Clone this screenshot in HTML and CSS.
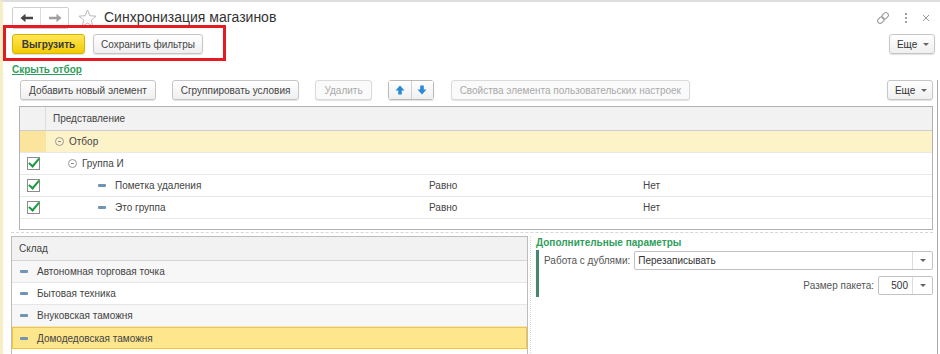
FILE: index.html
```html
<!DOCTYPE html>
<html>
<head>
    <title>Синхронизация магазинов</title>
    <link rel="stylesheet" href="styles.css">
</head>
<body>
    <div class="window">
        <header class="header">
            <div class="nav">
                <span class="nav-btn">
                    <svg width="14" height="10" viewBox="0 0 14 10"><path d="M0.5 5 L5.5 0.8 V3.8 H13 V6.2 H5.5 V9.2 Z" fill="#454545"/></svg>
                </span>
                <span class="nav-btn">
                    <svg width="14" height="10" viewBox="0 0 14 10"><path d="M13.5 5 L8.5 0.8 V3.8 H1 V6.2 H8.5 V9.2 Z" fill="#a0a0a0"/></svg>
                </span>
            </div>
            <svg class="star" width="19" height="18" viewBox="0 0 19 18"><polygon points="9.5,1 11.9,6.7 18,7.2 13.3,11.2 14.8,17.2 9.5,14 4.2,17.2 5.7,11.2 1,7.2 7.1,6.7" fill="none" stroke="#b9b9b9" stroke-width="1"/></svg>
            <h1 class="title">Синхронизация магазинов</h1>
            <div class="header-tools">
                <svg width="14" height="14" viewBox="0 0 14 14"><g transform="rotate(-45 7 7)" fill="none" stroke="#9a9a9a" stroke-width="1.1"><rect x="0.5" y="4.5" width="7" height="5" rx="2.5"/><rect x="6.5" y="4.5" width="7" height="5" rx="2.5"/></g></svg>
                <svg width="4" height="12" viewBox="0 0 4 12"><circle cx="2" cy="2" r="1.1" fill="#8a8a8a"/><circle cx="2" cy="6" r="1.1" fill="#8a8a8a"/><circle cx="2" cy="10" r="1.1" fill="#8a8a8a"/></svg>
                <svg width="8" height="8" viewBox="0 0 8 8"><path d="M1 1 L7 7 M7 1 L1 7" stroke="#9a9a9a" stroke-width="1"/></svg>
            </div>
        </header>

        <div class="toolbar main-bar">
            <button class="btn btn-primary">Выгрузить</button>
            <button class="btn">Сохранить фильтры</button>
            <span class="spacer"></span>
            <button class="btn btn-more">Еще <span class="caret"></span></button>
        </div>
        <div class="highlight-frame"></div>

        <a class="link-toggle" href="#">Скрыть отбор</a>

        <main class="content">
            <div class="toolbar sub-bar">
                <button class="btn">Добавить новый элемент</button>
                <button class="btn">Сгруппировать условия</button>
                <button class="btn" disabled>Удалить</button>
                <div class="btn-pair">
                    <button class="btn btn-icon">
                        <svg width="10" height="10" viewBox="0 0 10 10"><polygon points="5,0.5 9.5,5.5 6.8,5.5 6.8,9.5 3.2,9.5 3.2,5.5 0.5,5.5" fill="#2a8ad6"/></svg>
                    </button>
                    <button class="btn btn-icon">
                        <svg width="10" height="10" viewBox="0 0 10 10"><polygon points="5,9.5 9.5,4.5 6.8,4.5 6.8,0.5 3.2,0.5 3.2,4.5 0.5,4.5" fill="#2a8ad6"/></svg>
                    </button>
                </div>
                <button class="btn" disabled>Свойства элемента пользовательских настроек</button>
                <span class="spacer"></span>
                <button class="btn btn-more">Еще <span class="caret"></span></button>
            </div>

            <div class="filter-table">
                <div class="cell head check-col"></div>
                <div class="cell head">Представление</div>
                <div class="cell head"></div>
                <div class="cell head"></div>

                <div class="cell check-col current"></div>
                <div class="cell current"><span class="tree lvl0"><span class="collapse"></span>Отбор</span></div>
                <div class="cell current"></div>
                <div class="cell current"></div>

                <div class="cell check-col"><span class="checkbox"></span></div>
                <div class="cell"><span class="tree lvl1"><span class="collapse"></span>Группа И</span></div>
                <div class="cell"></div>
                <div class="cell"></div>

                <div class="cell check-col"><span class="checkbox"></span></div>
                <div class="cell"><span class="tree lvl2"><span class="dash"></span>Пометка удаления</span></div>
                <div class="cell">Равно</div>
                <div class="cell">Нет</div>

                <div class="cell check-col"><span class="checkbox"></span></div>
                <div class="cell"><span class="tree lvl2"><span class="dash"></span>Это группа</span></div>
                <div class="cell">Равно</div>
                <div class="cell">Нет</div>
            </div>

            <div class="split">
                <div class="list">
                    <div class="list-head">Склад</div>
                    <div class="list-row odd"><span class="dash"></span>Автономная торговая точка</div>
                    <div class="list-row"><span class="dash"></span>Бытовая техника</div>
                    <div class="list-row odd"><span class="dash"></span>Внуковская таможня</div>
                    <div class="list-row selected"><span class="dash"></span>Домодедовская таможня</div>
                    <div class="list-row"></div>
                </div>
                <div class="params">
                    <div class="params-title">Дополнительные параметры</div>
                    <div class="params-group">
                        <div class="field">
                            <label>Работа с дублями:</label>
                            <div class="select wide"><span class="select-value">Перезаписывать</span><span class="select-btn"><span class="caret"></span></span></div>
                        </div>
                        <div class="field right">
                            <label>Размер пакета:</label>
                            <div class="select small"><span class="select-value num">500</span><span class="select-btn"><span class="caret"></span></span></div>
                        </div>
                    </div>
                </div>
            </div>
        </main>
    </div>
</body>
</html>
```

FILE: styles.css
```css
body {
    margin: 0;
    background-color: #fff;
    font-family: "Liberation Sans", Arial, sans-serif;
    font-size: 10px;
    color: #444;
}
.window {
    position: relative;
    width: 940px;
    height: 354px;
    box-sizing: border-box;
    border-top: 2px solid #dedede;
    border-left: 3px solid #f6efc6;
    overflow: hidden;
    background-color: #fff;
}
.header {
    display: flex;
    align-items: center;
    height: 22px;
    margin-top: 5px;
    padding-left: 9px;
    padding-right: 10px;
}
.nav {
    display: flex;
    height: 22px;
    box-sizing: border-box;
    border: 1px solid #cfcfcf;
    border-radius: 2px;
}
.nav-btn {
    display: flex;
    align-items: center;
    justify-content: center;
    width: 27px;
}
.nav-btn + .nav-btn {
    border-left: 1px solid #dcdcdc;
}
.star {
    margin-left: 9px;
}
.title {
    margin: -3px 0 0 7px;
    font-size: 14px;
    font-weight: normal;
    color: #333;
}
.header-tools {
    display: flex;
    align-items: center;
    margin-left: auto;
    gap: 14px;
}
.toolbar {
    display: flex;
    align-items: center;
}
.main-bar {
    height: 20px;
    margin-top: 5px;
    padding-left: 9px;
    padding-right: 5px;
    gap: 8px;
}
.spacer {
    flex: 1;
}
.btn {
    height: 20px;
    box-sizing: border-box;
    padding: 0 8px;
    border: 1px solid #c6c6c6;
    border-radius: 3px;
    background: linear-gradient(#ffffff, #efefef);
    box-shadow: 0 1px 1px rgba(0, 0, 0, 0.12);
    font-family: "Liberation Sans", Arial, sans-serif;
    font-size: 10px;
    color: #444;
    white-space: nowrap;
}
.main-bar .btn {
    padding: 0 7px;
}
.btn:disabled {
    color: #a9a9a9;
    border-color: #dadada;
    background: #fafafa;
}
.main-bar .btn-primary,
.btn-primary {
    width: 73px;
    padding: 0;
    border-color: #d6b300;
    background: linear-gradient(#ffe757, #f2cb05);
    font-weight: bold;
    color: #3a3a3a;
}
.main-bar .btn-more,
.btn-more {
    width: 46px;
    padding: 0 0 0 2px;
    color: #333;
}
.caret {
    display: inline-block;
    width: 0;
    height: 0;
    margin-left: 3px;
    vertical-align: middle;
    border-left: 3px solid transparent;
    border-right: 3px solid transparent;
    border-top: 3px solid #666;
}
.highlight-frame {
    position: absolute;
    left: 0;
    top: 23px;
    width: 223px;
    height: 36px;
    box-sizing: border-box;
    border: 3px solid #e51b24;
}
.link-toggle {
    display: block;
    width: max-content;
    margin-top: 9px;
    margin-left: 9px;
    line-height: 13px;
    font-weight: bold;
    color: #2f9e5c;
    text-decoration: underline;
}
.content {
    margin-top: 4px;
    margin-right: 2px;
    padding-left: 8px;
    padding-right: 4px;
    border-right: 1px solid #a8a8a8;
    height: 276px;
}
.sub-bar {
    height: 20px;
    margin-left: 9px;
}
.sub-bar .btn {
    margin-right: 16px;
}
.sub-bar .btn-more {
    margin-right: 0;
}
.btn-pair {
    display: flex;
    margin-right: 17px;
    border: 1px solid #b9b9b9;
    border-radius: 3px;
    box-shadow: 0 1px 1px rgba(0, 0, 0, 0.12);
}
.btn-pair .btn-icon {
    display: flex;
    align-items: center;
    justify-content: center;
    width: 22px;
    height: 18px;
    margin: 0;
    padding: 0;
    border: none;
    border-radius: 0;
    box-shadow: none;
}
.btn-pair .btn-icon + .btn-icon {
    border-left: 1px solid #d0d0d0;
}
.filter-table {
    display: grid;
    grid-template-columns: 26px 376px 214px 1fr;
    grid-auto-rows: 22px;
    grid-template-rows: 24px;
    margin-top: 6px;
    margin-left: 8px;
    height: 124px;
    box-sizing: border-box;
    border: 1px solid #b3b3b3;
}
.cell {
    display: flex;
    align-items: center;
    padding-left: 7px;
    border-bottom: 1px solid #e8e8e8;
    color: #444;
}
.cell.head {
    background-color: #f2f2f2;
    border-bottom-color: #cdcdcd;
}
.cell.check-col {
    justify-content: center;
    padding-left: 0;
}
.cell.head.check-col {
    border-right: 1px solid #dcdcdc;
}
.cell.current {
    background-color: #fcf3c9;
}
.cell.check-col.current {
    background-color: #fbe49c;
}
.checkbox {
    position: relative;
    width: 11px;
    height: 11px;
    border: 1px solid #8c8c8c;
    background-color: #fff;
}
.checkbox::after {
    content: "";
    position: absolute;
    left: 3px;
    top: -2px;
    width: 4px;
    height: 9px;
    border-right: 2px solid #1b9b43;
    border-bottom: 2px solid #1b9b43;
    transform: rotate(40deg);
}
.tree {
    display: flex;
    align-items: center;
}
.tree.lvl0 {
    margin-left: 2px;
}
.tree.lvl1 {
    margin-left: 15px;
}
.tree.lvl2 {
    margin-left: 45px;
}
.collapse {
    position: relative;
    width: 7px;
    height: 7px;
    margin-right: 5px;
    border: 1px solid #999;
    border-radius: 50%;
}
.collapse::after {
    content: "";
    position: absolute;
    left: 2px;
    top: 3px;
    width: 3px;
    height: 1px;
    background-color: #888;
}
.dash {
    display: inline-block;
    width: 8px;
    height: 3px;
    margin-right: 9px;
    border-radius: 1px;
    background-color: #7094b2;
}
.split {
    display: flex;
    margin-top: 2px;
    padding-top: 3px;
    border-top: 1px dashed #d6d6d6;
}
.list {
    width: 517px;
    box-sizing: border-box;
    border: 1px solid #bdbdbd;
    border-bottom: none;
}
.list-head {
    height: 23px;
    line-height: 23px;
    padding-left: 7px;
    background-color: #f2f2f2;
    border-bottom: 1px solid #d5d5d5;
}
.list-row {
    display: flex;
    align-items: center;
    height: 21px;
    padding-left: 8px;
    border-bottom: 1px solid #e6e6e6;
    background-color: #fff;
}
.list-row.odd {
    background-color: #f7f7f7;
}
.list-row.selected {
    height: 20px;
    background-color: #fde68c;
    border: 1px solid #f7c82a;
    padding-left: 7px;
}
.params {
    flex: 1;
    margin-left: 2px;
    padding-left: 5px;
    border-left: 1px dotted #d6d6d6;
}
.params-title {
    margin-top: 1px;
    font-weight: bold;
    color: #2f9e5c;
}
.params-group {
    display: flex;
    flex-direction: column;
    gap: 6px;
    margin-top: 2px;
    padding: 1px 0 2px 5px;
    border-left: 3px solid #44896c;
}
.field {
    display: flex;
    align-items: center;
}
.field label {
    margin-right: 4px;
    color: #555;
}
.field.right {
    justify-content: flex-end;
}
.select {
    display: flex;
    height: 19px;
    box-sizing: border-box;
    border: 1px solid #c2c2c2;
    border-radius: 2px;
    background-color: #fff;
}
.select.wide {
    flex: 1;
}
.select.small {
    width: 55px;
}
.select-value {
    flex: 1;
    padding-left: 3px;
    line-height: 17px;
    color: #333;
}
.select-value.num {
    padding-right: 4px;
    text-align: right;
}
.select-btn {
    display: flex;
    align-items: center;
    justify-content: center;
    width: 19px;
    border-left: 1px solid #dcdcdc;
}
.select-btn .caret {
    margin-left: 0;
}
```
